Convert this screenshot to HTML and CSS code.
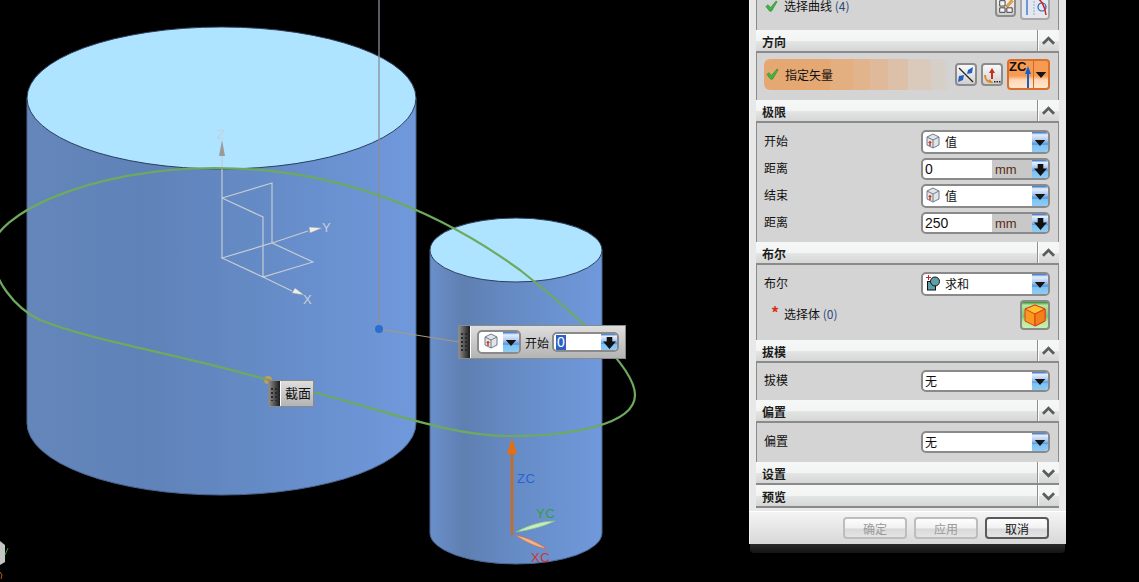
FILE: index.html
```html
<!DOCTYPE html>
<html lang="zh">
<head>
<meta charset="utf-8">
<title>拉伸</title>
<link rel="stylesheet" href="styles.css">
</head>
<body>
<svg class="defs" width="0" height="0">
  <defs>
    <symbol id="check" viewBox="0 0 14 14"><path d="M1 7l2-2 3 3 6-7 1 1-6 10h-2z" fill="#3fb63f" stroke="#1f7f2f" stroke-width=".6"/></symbol>
    <symbol id="cube" viewBox="0 0 16 16"><path d="M8 1l6 3v8l-6 3-6-3V4z" fill="#e4e4e4" stroke="#6a7d92"/><path d="M2 4l6 3 6-3M8 7v8" fill="none" stroke="#6a7d92"/><path d="M5 8v5" stroke="#c8301c" stroke-width="1.4"/><path d="M3.500 9.500h3" stroke="#c8301c"/></symbol>
    <symbol id="down" viewBox="0 0 12 8"><path d="M0 1h12L6 8z" fill="#151515"/></symbol>
    <symbol id="fat" viewBox="0 0 14 14"><path d="M4 1h6v5h4l-7 8-7-8h4z" fill="#111"/></symbol>
    <symbol id="chev-up" viewBox="0 0 14 10"><path d="M1 8l6-6 6 6" fill="none" stroke="#5c5c5c" stroke-width="3"/></symbol>
    <symbol id="chev-down" viewBox="0 0 14 10"><path d="M1 2l6 6 6-6" fill="none" stroke="#5c5c5c" stroke-width="3"/></symbol>
  </defs>
</svg>
<main class="screen">
  <section class="viewport">
    <svg class="scene" width="749" height="582" viewBox="0 0 749 582">
      <defs>
        <linearGradient id="sideA" x1="0" x2="1" y1="0" y2="0">
          <stop offset="0" stop-color="#6486bb"/><stop offset=".3" stop-color="#5f82b8"/><stop offset=".6" stop-color="#658bc6"/><stop offset="1" stop-color="#7099dc"/>
        </linearGradient>
        <linearGradient id="sideB" x1="0" x2="1" y1="0" y2="0">
          <stop offset="0" stop-color="#6a8fca"/><stop offset=".2" stop-color="#5f7fb1"/><stop offset=".5" stop-color="#668cc6"/><stop offset="1" stop-color="#7099dc"/>
        </linearGradient>
      </defs>
      <path d="M27 98V423A194.500 72 0 0 0 416 423V98Z" fill="url(#sideA)" stroke="#4a6590"/>
      <ellipse cx="221.500" cy="98" rx="194.500" ry="71" fill="#aee4ff" stroke="#2c3f5c"/>
      <path d="M430 250V533A86 31 0 0 0 602 533V250Z" fill="url(#sideB)" stroke="#4a6590"/>
      <ellipse cx="516" cy="250" rx="86" ry="32" fill="#aee4ff" stroke="#2c3f5c"/>

      <path class="triad" d="M222 258V146M222 198L272 183V243M222 198L263 217V277M222 258L263 277L313 262L272 243ZM263 277L292 291M272 243L308 231"/>
      <path d="M222 140l-3 16h6z" fill="#9a9a9a"/>
      <path d="M322 228l-13-1 1 6z" fill="#eee" stroke="#999" stroke-width=".5"/>
      <path d="M304 295l-9-7-3 5z" fill="#eee" stroke="#999" stroke-width=".5"/>
      <text class="axis-w" x="217" y="139">Z</text>
      <text class="axis-w" x="322" y="232">Y</text>
      <text class="axis-w" x="303" y="304">X</text>

      <path d="M379 0V329" stroke="#8c8c9c" stroke-width="1.300"/>
      <path d="M379 329L459 342" stroke="#a89a80" stroke-width="1.200"/>
      <circle cx="379" cy="329" r="4" fill="#2a6fd0"/>
      <circle cx="268" cy="380" r="4" fill="#c79a5e"/>

      <path class="curve" d="M-8 250C-8 215 90 168 215 168C330 168 430 205 520 270C570 310 635 365 635 395C635 425 570 436 510 436C450 436 390 412 313 392L250 375C180 355 90 340 40 320C15 308-8 280-8 250Z"/>

      <path d="M512 535V450" stroke="#cf6a1c" stroke-width="2.500"/>
      <path d="M512 438l-5 16h10z" fill="#e26f16"/>
      <path d="M516 532C530 524 545 521 555 521C545 526 530 530 516 532Z" fill="#c6ecc0" stroke="#7fbf7f" stroke-width=".7"/>
      <path d="M515 535C527 537 538 543 547 549C535 547 524 541 515 535Z" fill="#f0b48c" stroke="#c86a50" stroke-width=".7"/>
      <text class="axis-b" x="517" y="483">ZC</text>
      <text class="axis-g" x="536" y="518">YC</text>
      <text class="axis-r" x="531" y="562">XC</text>

      <path d="M0 541l5 4v17l-5 3z" fill="#c4c4c4"/>
      <path d="M5 555l3-7" stroke="#2fa02f"/>
      <path d="M0 572l2 3-1 4" fill="none" stroke="#b85a20"/>
    </svg>

    <div class="tag tag-section">
      <span class="grip"></span>
      <span class="tag-text">截面</span>
    </div>

    <div class="tag tag-start">
      <span class="grip"></span>
      <span class="combo combo-mini">
        <span class="combo-value"><svg class="i16"><use href="#cube"/></svg></span>
        <span class="drop"><svg class="i-down"><use href="#down"/></svg></span>
      </span>
      <span class="tag-label">开始</span>
      <span class="combo combo-input">
        <span class="input-value"><span class="selected">0</span></span>
        <span class="drop"><svg class="i-fat"><use href="#fat"/></svg></span>
      </span>
    </div>
  </section>

  <aside class="dialog">
    <div class="stack">
      <div class="body body-first">
        <svg class="i-check"><use href="#check"/></svg>
        <span class="label">选择曲线 <span class="count">(4)</span></span>
        <span class="tools">
          <span class="tool tool-a">
            <svg width="19" height="19" viewBox="0 0 19 19"><path d="M3 3h6v6H3zM3 11h6v5H3zM11 11h6v5h-6z" fill="#f4f4f4" stroke="#333"/><path d="M10 9l6-7 2 2-6 6z" fill="#f0b030" stroke="#c05020" stroke-width=".7"/></svg>
          </span>
          <span class="tool tool-b">
            <svg width="26" height="20" viewBox="0 0 26 20"><path d="M5 0V17" stroke="#2060c8" stroke-width="1.200"/><path d="M12 3V17" stroke="#8ab0d0" stroke-dasharray="2 1"/><circle cx="20" cy="9" r="4" fill="none" stroke="#2060c8" stroke-width="1.200"/><path d="M14 0c5 1 9 8 10 17" fill="none" stroke="#c82a1c" stroke-width="1.500"/></svg>
          </span>
        </span>
      </div>

      <header class="head"><h2>方向</h2><span class="toggle"><svg class="i-chev"><use href="#chev-up"/></svg></span></header>
      <div class="body body-dir">
        <div class="vector">
          <svg class="i-check"><use href="#check"/></svg>
          <span class="label">指定矢量</span>
        </div>
        <span class="tool tool-v">
          <svg width="18" height="18" viewBox="0 0 18 18"><path d="M2 2l14 14" stroke="#222" stroke-width="1.300"/><path d="M16 1l-1 6-5 1 1-4zM1 16l1-6 5-1-1 5z" fill="#1f5fc0"/></svg>
        </span>
        <span class="tool tool-v tool-gap">
          <svg width="18" height="18" viewBox="0 0 18 18"><path d="M9 2l-3 5h2v6h2V7h2z" fill="#c8301c"/><path d="M2 9c0 5 3 7 6 7l-2-2" fill="none" stroke="#e08a20" stroke-width="2"/><path d="M11 15h1.500v1.500H11zM13.500 15H15v1.500h-1.500zM16 15h1.500v1.500H16z" fill="#222"/></svg>
        </span>
        <span class="zc">
          <span class="zc-main">
            <span class="zc-text">ZC</span>
            <svg class="zc-arrow" width="6" height="24" viewBox="0 0 6 24"><path d="M3 0l3 8H4v16H2V8H0z" fill="#1560d0"/></svg>
          </span>
          <span class="zc-drop"><svg class="i-down"><use href="#down"/></svg></span>
        </span>
      </div>

      <header class="head"><h2>极限</h2><span class="toggle"><svg class="i-chev"><use href="#chev-up"/></svg></span></header>
      <div class="body body-form">
        <div class="row">
          <span class="label">开始</span>
          <span class="combo"><span class="combo-value"><svg class="i16"><use href="#cube"/></svg>值</span><span class="drop"><svg class="i-down"><use href="#down"/></svg></span></span>
        </div>
        <div class="row">
          <span class="label">距离</span>
          <span class="combo combo-num"><span class="input-value">0</span><span class="unit">mm</span><span class="drop"><svg class="i-fat"><use href="#fat"/></svg></span></span>
        </div>
        <div class="row">
          <span class="label">结束</span>
          <span class="combo"><span class="combo-value"><svg class="i16"><use href="#cube"/></svg>值</span><span class="drop"><svg class="i-down"><use href="#down"/></svg></span></span>
        </div>
        <div class="row">
          <span class="label">距离</span>
          <span class="combo combo-num"><span class="input-value">250</span><span class="unit">mm</span><span class="drop"><svg class="i-fat"><use href="#fat"/></svg></span></span>
        </div>
      </div>

      <header class="head"><h2>布尔</h2><span class="toggle"><svg class="i-chev"><use href="#chev-up"/></svg></span></header>
      <div class="body body-bool">
        <div class="row">
          <span class="label">布尔</span>
          <span class="combo"><span class="combo-value"><svg class="i16" viewBox="0 0 16 16"><path d="M1 2.500h5M3.500 0v5" stroke="#d02020"/><rect x="2.500" y="6.500" width="8" height="8.500" fill="#5f9fa8" stroke="#111"/><circle cx="10" cy="6.500" r="4.500" fill="#5f9fa8" stroke="#111"/></svg>求和</span><span class="drop"><svg class="i-down"><use href="#down"/></svg></span></span>
        </div>
        <div class="row row-select">
          <span class="label label-select"><span class="star">*</span>选择体 <span class="count">(0)</span></span>
          <span class="tool-body">
            <svg width="24" height="24" viewBox="0 0 24 24"><path d="M12 2l10 4v12l-10 5-10-5V6z" fill="#f89a1c" stroke="#d8401a"/><path d="M2 6l10 5 10-5-10-4z" fill="#ffc02a" stroke="#d8401a"/><path d="M12 11v12" stroke="#d8401a"/><path d="M12 11l10-5v12l-10 5z" fill="#f4801c" stroke="#d8401a"/></svg>
          </span>
        </div>
      </div>

      <header class="head"><h2>拔模</h2><span class="toggle"><svg class="i-chev"><use href="#chev-up"/></svg></span></header>
      <div class="body body-draft">
        <div class="row">
          <span class="label">拔模</span>
          <span class="combo combo-plain"><span class="combo-value">无</span><span class="drop"><svg class="i-down"><use href="#down"/></svg></span></span>
        </div>
      </div>

      <header class="head"><h2>偏置</h2><span class="toggle"><svg class="i-chev"><use href="#chev-up"/></svg></span></header>
      <div class="body body-offset">
        <div class="row">
          <span class="label">偏置</span>
          <span class="combo combo-plain"><span class="combo-value">无</span><span class="drop"><svg class="i-down"><use href="#down"/></svg></span></span>
        </div>
      </div>

      <header class="head"><h2>设置</h2><span class="toggle"><svg class="i-chev"><use href="#chev-down"/></svg></span></header>
      <header class="head"><h2>预览</h2><span class="toggle"><svg class="i-chev"><use href="#chev-down"/></svg></span></header>
    </div>
    <footer class="actions">
      <button class="btn" disabled>确定</button>
      <button class="btn" disabled>应用</button>
      <button class="btn btn-on">取消</button>
    </footer>
    <div class="shadow"></div>
  </aside>
</main>
</body>
</html>
```

FILE: styles.css
```css
* { box-sizing: border-box; }
html, body { margin: 0; padding: 0; background: #000; }
body { width: 1139px; height: 582px; overflow: hidden; font: 12px "Noto Sans CJK SC", "Liberation Sans", sans-serif; color: #111; }
.defs { display: block; height: 0; }
.screen { display: flex; width: 1139px; height: 582px; overflow: hidden; }

/* viewport */
.viewport { position: relative; width: 749px; height: 582px; flex: none; background: #000; }
.scene { display: block; }
.triad { fill: none; stroke: #c4ccd4; stroke-width: 1.200; }
.curve { fill: none; stroke: #6eaa5e; stroke-width: 2.200; }
.scene text { font: 13px "Liberation Sans", sans-serif; letter-spacing: .5px; }
.axis-w { fill: #c8d0d8; }
.axis-b { fill: #2a62d0; }
.axis-g { fill: #2fa03c; }
.axis-r { fill: #d0352a; }

.tag { position: absolute; display: flex; align-items: center; border: 1px solid #8a8a8a; background: linear-gradient(#dedede, #b4b4b4); }
.tag-section { left: 268px; top: 380px; width: 46px; height: 27px; }
.tag-start { left: 458px; top: 325px; width: 168px; height: 34px; }
.grip { align-self: stretch; width: 12px; flex: none; border-right: 1px solid #fff; background: radial-gradient(circle, #2a2a2a 1px, transparent 1.300px) 1px 2px / 4px 4px, linear-gradient(90deg, #8c8c8c, #1a1a1a); background-clip: content-box, border-box; padding: 5px 0; }
.tag-text { padding-left: 4px; padding-bottom: 2px; font-size: 13px; }
.tag-label { margin: 0 3px 0 4px; }
.tag-start .grip { margin-right: 6px; }

/* dialog */
.dialog { width: 317px; flex: none; margin-top: -6px; align-self: flex-start; position: relative; }
.stack { background: #e8e8e8; padding: 0 7px 3px 6px; border-left: 1px solid #f4f4f4; }
.head { display: flex; height: 23px; background: linear-gradient(#f6f8f7 0, #f3f5f4 50%, #e2e5e4 55%, #d6d6d6 100%); border-bottom: 2px solid #8a8a8a; }
.head h2 { margin: 0; flex: 1; padding: 4px 0 0 6px; font-size: 12px; line-height: 15px; font-weight: 700; color: #1c1c1c; }
.toggle { width: 22px; display: flex; align-items: center; justify-content: center; border-left: 1px solid #8f8f8f; box-shadow: inset 1px 0 #fff; }
.i-chev { width: 13px; height: 10px; }
.body { background: #d4d4d4; border-left: 1px solid #8a8a8a; border-right: 1px solid #8a8a8a; }
.body-first { height: 36px; display: flex; align-items: flex-start; padding: 1px 8px 0 8px; }
.body-first .i-check { margin-top: 5px; }
.body-first .label { margin-top: 5px; line-height: 12px; }
.i-check { width: 13px; height: 13px; flex: none; margin-right: 6px; }
.label { line-height: 20px; white-space: nowrap; }
.row > .label { padding-bottom: 2px; }
.row > .label-select { padding-bottom: 0; }
.count { color: #2a4a7a; }
.tools { margin-left: auto; display: flex; gap: 4px; }
.tool { display: flex; align-items: center; justify-content: center; background: linear-gradient(#fafafa, #cfcfcf); border: 2px solid #8c8c8c; border-radius: 4px; height: 22px; overflow: hidden; }
.tool-a { width: 21px; }
.tool-b { width: 30px; height: 25px; background: #e4e8ee; border-color: #a8a8a8; }
.body-dir { height: 47px; display: flex; align-items: center; padding: 0 8px 4px 7px; }
.vector { width: 186px; height: 31px; display: flex; align-items: center; padding-left: 2px; border-radius: 6px 0 0 6px; background: linear-gradient(90deg, #e5a872 66px, #e3ae80 66px, #e3ae80 89px, #e1b48c 89px, #e1b48c 106px, #dfb999 106px, #dfb999 124px, #dcc1a8 124px, #dcc1a8 144px, #dacabb 144px, #dacabb 167px, #d6cfc8 167px, #d6cfc8 180px, #d4d4d4 186px); }
.tool-v { width: 22px; height: 23px; margin-left: 5px; }
.tool-gap { margin-left: 4px; }
.zc { display: flex; width: 43px; height: 31px; margin-left: 4px; border: 2px solid #d8702a; border-radius: 4px; background: linear-gradient(#f79a52 0, #f79a52 55%, #ffd7b4 70%, #ffe6d0 100%); overflow: hidden; }
.zc-main { position: relative; flex: 1; border-right: 1px solid #c86a28; }
.zc-text { position: absolute; left: 0; top: -2px; font: 700 13px/16px "Liberation Sans", sans-serif; color: #111; }
.zc-arrow { position: absolute; right: 2px; top: 5px; }
.zc-drop { width: 14px; display: flex; align-items: center; justify-content: center; }
.i-down { width: 12px; height: 7px; display: block; }
.i-fat { width: 13px; height: 13px; display: block; }
.i16 { width: 16px; height: 16px; flex: none; margin-right: 4px; }

.body-form { height: 119px; padding: 7px 8px 0 7px; display: flex; flex-direction: column; gap: 4px; }
.row { display: flex; align-items: center; justify-content: space-between; }
.combo { display: flex; width: 129px; height: 24px; border: 2px solid #8a8a8a; border-radius: 5px; background: #fff; overflow: hidden; }
.combo-num { height: 22px; }
.combo-plain { height: 22px; }
.combo-value { flex: 1; display: flex; align-items: center; padding: 0 0 2px 2px; white-space: nowrap; }
.input-value { flex: 1; display: flex; align-items: center; padding-left: 2px; font: 14px "Liberation Sans", sans-serif; }
.unit { width: 40px; background: #c8c8c8; color: #5a2c10; display: flex; align-items: center; padding-left: 3px; font: 13px "Liberation Sans", sans-serif; }
.drop { width: 16px; flex: none; display: flex; align-items: center; justify-content: center; background: linear-gradient(#2c6cc8 0, #e6eefa 14%, #b7cff0 38%, #4c97e4 62%, #7cc2f2 64%, #8ecbf4 100%); }

.body-bool { height: 75px; padding: 7px 8px 0 7px; display: flex; flex-direction: column; gap: 4px; }
.row-select { align-items: flex-start; }
.label-select { padding-left: 7px; display: flex; align-items: baseline; margin-top: 4px; white-space: pre; }
.star { color: #d8301c; font-weight: 700; font-size: 16px; line-height: 16px; width: 13px; }
.tool-body { width: 30px; height: 30px; display: flex; align-items: center; justify-content: center; border: 2px solid #8a8a8a; border-radius: 4px; background: linear-gradient(#2f8a2f 0, #b8e8a0 12%, #7cc46c 55%, #b6ec9c 75%, #c8f0b0 100%); }

.body-draft { height: 37px; padding: 7px 8px 0 7px; }
.body-offset { height: 39px; padding: 8px 8px 0 7px; }

/* footer */
.actions { display: flex; justify-content: flex-end; gap: 7px; height: 33px; padding: 5px 17px 0 0; background: linear-gradient(#f4f4f4, #d8d8d8); border-left: 1px solid #f4f4f4; border-top: 1px solid #fff; }
.btn { width: 64px; height: 22px; padding: 0; font: 12px "Noto Sans CJK SC", sans-serif; color: #111; border: 2px solid #5a5a5a; border-radius: 4px; background: linear-gradient(#fdfdfd 0, #f1f1f1 50%, #d8d8d8 55%, #e4e4e4 100%); }
.btn:disabled { color: #9a9a9a; border-color: #bdbdbd; }
.shadow { height: 9px; margin: 0 1px; border-radius: 0 0 4px 4px; background: linear-gradient(#2a2a2a, #141414); }

/* floating value editor */
.combo-mini { width: 44px; height: 24px; }
.combo-mini .combo-value { padding-left: 4px; }
.combo-mini .i16 { margin: 0; }
.combo-input { width: 67px; height: 20px; }
.combo-input .input-value { padding-left: 2px; }
.selected { background: #2c62c8; color: #fff; padding: 0 1px; line-height: 15px; }
```
